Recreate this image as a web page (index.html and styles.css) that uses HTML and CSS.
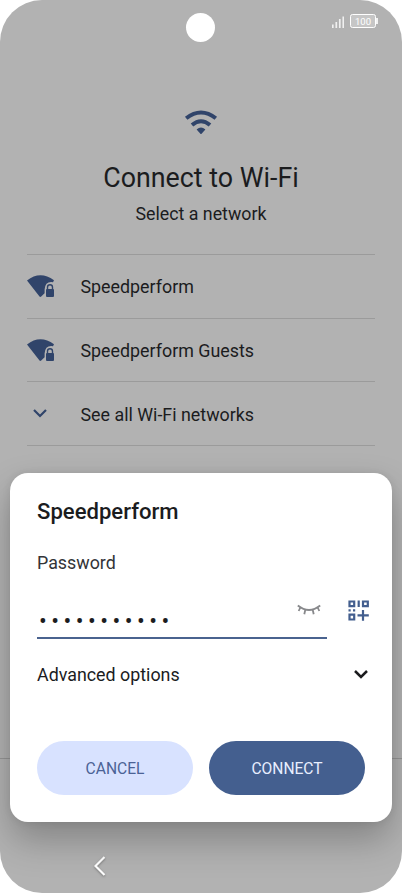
FILE: index.html
```html
<!DOCTYPE html>
<html lang="en">
<head>
<meta charset="utf-8">
<title>Connect to Wi-Fi</title>
<link rel="stylesheet" href="styles.css">
</head>
<body>
<main class="screen">
  <span class="camera"></span>
  <header class="status">
    <svg class="signal" width="12" height="12" viewBox="0 0 12 12"><path d="M.8 8.5V12M4.3 6V12M7.8 3V12M11.3 .5V12"/></svg>
    <span class="battery">100</span>
  </header>
  <section class="intro">
    <svg class="wifi" width="34" height="25" viewBox="0 0 34 25">
      <path class="arc" d="M2.2 8.3Q17-3.4 31.8 8.3M8 15Q17 7.6 26 15"/>
      <path class="dot" d="M12.6 19.4Q17 15.8 21.4 19.4L17.6 23.8Q17 24.4 16.4 23.8Z"/>
    </svg>
    <h1 class="title">Connect to Wi-Fi</h1>
    <p class="subtitle">Select a network</p>
  </section>
  <ul class="networks">
    <li class="network">
      <svg class="locked" width="28" height="23" viewBox="0 0 28 23"><path d="M0 5.6Q13-5 27 5.2L26 7.2Q18.2 6 17.6 14.5V18.3L14.2 21.5Q13.2 22.4 12.3 21.3Z"/><rect x="19" y="14" width="8" height="8" rx="1"/><path class="shackle" d="M20.5 14.5V12.3a2.5 2.5 0 0 1 5 0V14.5"/></svg>
      <span>Speedperform</span>
    </li>
    <li class="network">
      <svg class="locked" width="28" height="23" viewBox="0 0 28 23"><path d="M0 5.6Q13-5 27 5.2L26 7.2Q18.2 6 17.6 14.5V18.3L14.2 21.5Q13.2 22.4 12.3 21.3Z"/><rect x="19" y="14" width="8" height="8" rx="1"/><path class="shackle" d="M20.5 14.5V12.3a2.5 2.5 0 0 1 5 0V14.5"/></svg>
      <span>Speedperform Guests</span>
    </li>
    <li class="network">
      <svg class="chevron navy" width="14" height="9" viewBox="0 0 14 9"><path d="M1 1L7 7L13 1"/></svg>
      <span>See all Wi-Fi networks</span>
    </li>
  </ul>
  <div class="bottom-line"></div>
  <svg class="back" width="12" height="20" viewBox="0 0 12 20"><path d="M10.5 1L1.5 10L10.5 19"/></svg>

  <section class="dialog" role="dialog">
    <h2 class="dialog-title">Speedperform</h2>
    <p class="label">Password</p>
    <div class="password-row">
      <div class="field">
        <span class="dots">•••••••••••</span>
        <svg class="eye" width="24" height="12" viewBox="0 0 24 12"><path d="M.8 1.5Q12 10.5 23.2 1.5M3.3 3.5L1.7 7M8.3 5.8L7.3 10.3M15.7 5.8L16.7 10.3M20.7 3.5L22.3 7"/></svg>
      </div>
      <svg class="qr" width="22" height="22" viewBox="0 0 22 22"><path d="M1.5 1.5H6.2V6.2H1.5ZM15 1.5H19.8V6.2H15ZM1.5 14.7H6.2V19.5H1.5ZM10.7 .5V7M15 9.9V20.8M9.5 15.3H20.8M.5 10.4H2.7M5 10.4H7.2"/></svg>
    </div>
    <div class="advanced">
      <span>Advanced options</span>
      <svg class="chevron" width="14" height="9" viewBox="0 0 14 9"><path d="M1 1L7 7L13 1"/></svg>
    </div>
    <div class="actions">
      <button class="button cancel">CANCEL</button>
      <button class="button connect">CONNECT</button>
    </div>
  </section>
</main>
</body>
</html>
```
FILE: styles.css
```css
* { box-sizing: border-box; }
body { margin: 0; background: #fff; font-family: Roboto, sans-serif; }
h1, h2, p, ul { margin: 0; padding: 0; font-weight: 400; }
svg { display: block; fill: none; flex: none; }

.screen {
  position: relative;
  width: 402px;
  height: 893px;
  border-radius: 42px;
  overflow: hidden;
  background: #b2b2b2;
  color: #1b1c1e;
}
.camera {
  position: absolute;
  left: 186px;
  top: 13px;
  width: 29px;
  height: 29px;
  border-radius: 50%;
  background: #fff;
}
.status {
  display: flex;
  justify-content: flex-end;
  height: 28px;
  padding: 14px 26px 0 0;
}
.signal { margin: 2px 6px 0 0; stroke: #f0f0f0; stroke-width: 1.7; }
.battery {
  position: relative;
  width: 26px;
  height: 14px;
  border: 1px solid #fff;
  border-radius: 2.5px;
  background: #c6c6c6;
  color: #fff;
  font-size: 9.5px;
  line-height: 13px;
  text-align: center;
}
.battery::after {
  content: "";
  position: absolute;
  left: 25px;
  top: 3px;
  width: 1.5px;
  height: 6px;
  background: #f2f2f2;
}

.intro {
  display: flex;
  flex-direction: column;
  align-items: center;
  height: 226px;
  padding-top: 82px;
}
.wifi .arc { stroke: #30446a; stroke-width: 4; }
.wifi .dot { fill: #30446a; }
.title { margin-top: 27px; font-size: 26.8px; line-height: 32px; }
.subtitle { margin-top: 9px; font-size: 17.8px; line-height: 22px; }

.networks {
  margin: 0 27px;
  border-top: 1px solid #9b9b9b;
  list-style: none;
}
.network {
  display: flex;
  align-items: center;
  height: 63.7px;
  border-bottom: 1px solid #9b9b9b;
  font-size: 17.85px;
  line-height: 22px;
}
.network span { padding-top: 2px; }
.network svg { margin-right: 25.5px; }
.locked { margin-top: 1px; fill: #30446a; }
.locked .shackle { fill: none; stroke: #30446a; stroke-width: 1.4; }
.chevron { stroke: #1b1c1e; stroke-width: 2.2; }
.network .navy { margin: 0 33.5px 0 6px; stroke: #30446a; }
.bottom-line { margin-top: 312px; height: 1px; background: #969696; }
.back { margin: 97px 0 0 94px; stroke: #fff; stroke-width: 2.2; filter: drop-shadow(0 1px 1px #777); }

.dialog {
  position: absolute;
  left: 10px;
  top: 472.5px;
  width: 382px;
  height: 349px;
  padding: 23px 27px 0;
  border-radius: 18px;
  background: #fff;
  box-shadow: 0 18px 36px rgba(0, 0, 0, .26), 0 0 8px rgba(0, 0, 0, .08);
}
.dialog-title { font-size: 22.1px; font-weight: 500; line-height: 30px; }
.label { margin-top: 26px; font-size: 17.85px; line-height: 22px; color: #333437; }
.password-row { display: flex; align-items: flex-start; margin-top: 24px; }
.field {
  display: flex;
  flex: none;
  justify-content: space-between;
  width: 290px;
  height: 41.5px;
  border-bottom: 2px solid #4a638f;
}
.dots { padding: 12px 0 0 2px; font-size: 23px; line-height: 24px; letter-spacing: 4.5px; }
.eye { margin: 6px 6px 0 0; stroke: #88898c; stroke-width: 1.8; }
.qr { margin: 2px 0 0 21px; stroke: #435e8e; stroke-width: 2.2; }
.advanced {
  display: flex;
  align-items: center;
  justify-content: space-between;
  margin-top: 24.5px;
  font-size: 17.85px;
  line-height: 22px;
}
.advanced .chevron { margin-right: -3px; stroke-width: 2.5; }
.actions { display: grid; grid-template-columns: 156px 156px; gap: 16px; margin-top: 55px; }
.button {
  height: 54px;
  padding: 2px 0 0;
  border: 0;
  border-radius: 27px;
  font: 15.6px/20px Roboto, sans-serif;
}
.cancel { background: #d8e2ff; color: #4b6296; }
.connect { background: #445f8f; color: #e8eeff; }
```
